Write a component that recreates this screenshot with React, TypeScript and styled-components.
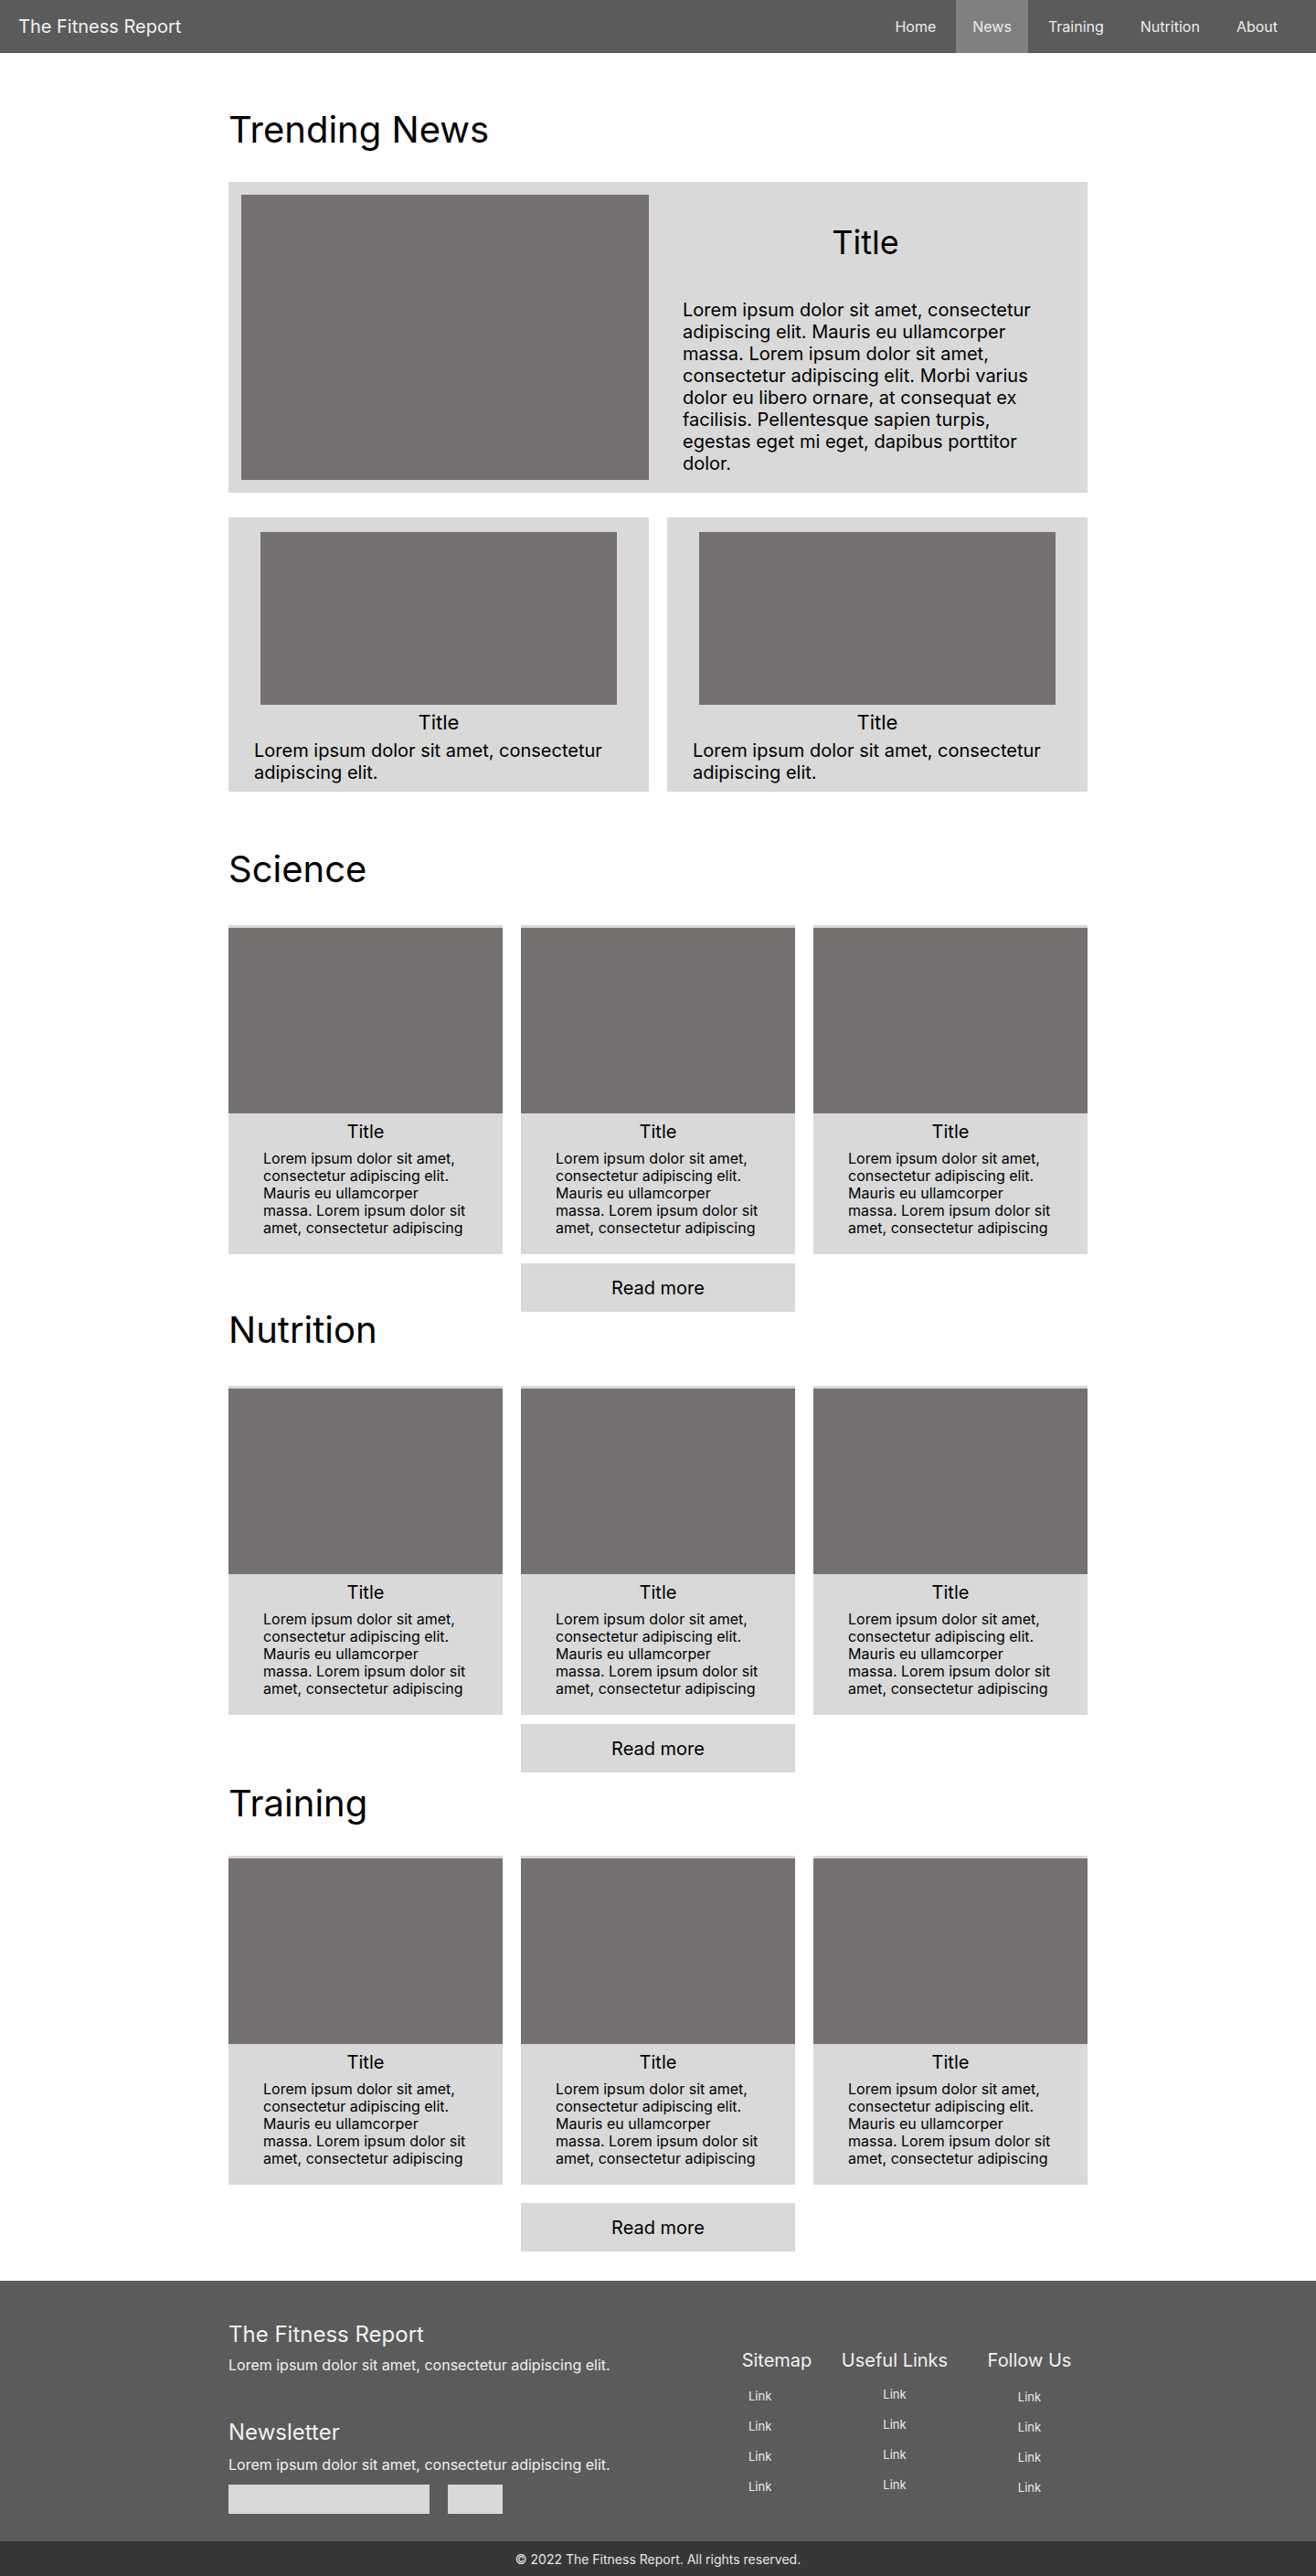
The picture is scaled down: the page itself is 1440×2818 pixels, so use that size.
import React from 'react'
import styled, { createGlobalStyle } from 'styled-components'

const lorem =
    'Lorem ipsum dolor sit amet, consectetur adipiscing elit. Mauris eu ullamcorper massa. Lorem ipsum dolor sit amet, consectetur adipiscing elit. Morbi varius dolor eu libero ornare, at consequat ex facilisis. Pellentesque sapien turpis, egestas eget mi eget, dapibus porttitor dolor.'
const shortLorem = 'Lorem ipsum dolor sit amet, consectetur adipiscing elit.'
const tileLorem =
    'Lorem ipsum dolor sit amet, consectetur adipiscing elit. Mauris eu ullamcorper massa. Lorem ipsum dolor sit amet, consectetur adipiscing'

const navItems = ['Home', 'News', 'Training', 'Nutrition', 'About']

const sections = [
    { name: 'Science', top: 65, bottom: 41, more: 10 },
    { name: 'Nutrition', top: 0, bottom: 41, more: 10 },
    { name: 'Training', top: 14, bottom: 37, more: 20 },
]

// column boxes sit between x=790 and x=1190; links in the sitemap column hug the left
const linkColumns = [
    { title: 'Sitemap', width: 120, pad: 0, listTop: 19, indent: 29 },
    { title: 'Useful Links', width: 138, pad: 0, listTop: 17 },
    { title: 'Follow Us', width: 142, pad: 15, listTop: 20 },
]

const App = () => {
    return (
        <>
            <GlobalStyle />
            <TopBar>
                <Brand>The Fitness Report</Brand>
                <Nav>
                    {navItems.map(item => (
                        <NavLink key={item} href="#" $active={item === 'News'}>
                            {item}
                        </NavLink>
                    ))}
                </Nav>
            </TopBar>

            <Main>
                <SectionTitle $top={0} $bottom={37}>Trending News</SectionTitle>
                <FeatureCard>
                    <FeatureImage />
                    <FeatureBody>
                        <FeatureTitle>Title</FeatureTitle>
                        <FeatureText>{lorem}</FeatureText>
                    </FeatureBody>
                </FeatureCard>
                <PairRow>
                    {[0, 1].map(i => (
                        <PairCard key={i}>
                            <PairImage />
                            <PairTitle>Title</PairTitle>
                            <PairText>{shortLorem}</PairText>
                        </PairCard>
                    ))}
                </PairRow>

                {sections.map(section => (
                    <React.Fragment key={section.name}>
                        <SectionTitle $top={section.top} $bottom={section.bottom}>
                            {section.name}
                        </SectionTitle>
                        <CardGrid>
                            {[0, 1, 2].map(i => (
                                <TileCard key={i}>
                                    <TileImage />
                                    <TileTitle>Title</TileTitle>
                                    <TileText>{tileLorem}</TileText>
                                </TileCard>
                            ))}
                        </CardGrid>
                        <MoreRow $top={section.more}>
                            <MoreButton>Read more</MoreButton>
                        </MoreRow>
                    </React.Fragment>
                ))}
            </Main>

            <Footer>
                <FooterInner>
                    <FooterAbout>
                        <FooterHeading>The Fitness Report</FooterHeading>
                        <FooterText>{shortLorem}</FooterText>
                        <FooterHeading $top={49}>Newsletter</FooterHeading>
                        <FooterText $top={11}>{shortLorem}</FooterText>
                        <NewsletterForm>
                            <EmailInput />
                            <SubmitButton />
                        </NewsletterForm>
                    </FooterAbout>
                    <LinkColumns>
                        {linkColumns.map(col => (
                            <LinkColumn key={col.title} $width={col.width} $pad={col.pad}>
                                <ColumnTitle>{col.title}</ColumnTitle>
                                <LinkList $top={col.listTop} $indent={col.indent}>
                                    {[0, 1, 2, 3].map(i => (
                                        <FooterLink key={i} href="#">Link</FooterLink>
                                    ))}
                                </LinkList>
                            </LinkColumn>
                        ))}
                    </LinkColumns>
                </FooterInner>
                <BottomBar>© 2022 The Fitness Report. All rights reserved.</BottomBar>
            </Footer>
        </>
    )
}

const GlobalStyle = createGlobalStyle`
    * {
        box-sizing: border-box;
    }
    body {
        margin: 0;
        background: #ffffff;
        color: #000000;
        font-family: Inter, "Noto Sans", sans-serif;
    }
    h1, h2, h3, p {
        margin: 0;
        font-weight: 400;
    }
`

const TopBar = styled.header`
    height: 58px;
    background: #5b5b5b;
    display: flex;
    justify-content: space-between;
    align-items: stretch;
    padding: 0 24px 0 20px;
`

const Brand = styled.div`
    display: flex;
    align-items: center;
    font-size: 20px;
    color: #f2f2f2;
`

const Nav = styled.nav`
    display: flex;
    gap: 4px;
`

const NavLink = styled.a<{ $active?: boolean }>`
    display: flex;
    align-items: center;
    padding: 0 18px;
    font-size: 16px;
    color: #ececec;
    text-decoration: none;
    background: ${p => (p.$active ? '#808080' : 'transparent')};
`

const Main = styled.main`
    width: 940px;
    margin: 0 auto;
    padding: 64px 0 32px;
`

const SectionTitle = styled.h2<{ $top: number; $bottom: number }>`
    font-size: 40px;
    line-height: 40px;
    margin: ${p => p.$top}px 0 ${p => p.$bottom}px;
`

const FeatureCard = styled.article`
    display: flex;
    height: 340px;
    padding: 14px;
    background: #d9d9d9;
`

const FeatureImage = styled.div`
    flex-shrink: 0;
    width: 446px;
    height: 312px;
    background: #757170;
`

const FeatureBody = styled.div`
    width: 400px;
    margin-left: 37px;
    padding-top: 30px;
`

const FeatureTitle = styled.h3`
    font-size: 36px;
    text-align: center;
    margin-bottom: 40px;
`

const FeatureText = styled.p`
    font-size: 20px;
    line-height: 24px;
`

const PairRow = styled.div`
    display: grid;
    grid-template-columns: 1fr 1fr;
    gap: 20px;
    margin-top: 27px;
`

const PairCard = styled.article`
    display: flex;
    flex-direction: column;
    align-items: center;
    height: 300px;
    padding-top: 16px;
    background: #d9d9d9;
    overflow: hidden;
`

const PairImage = styled.div`
    width: 390px;
    height: 189px;
    background: #757170;
`

const PairTitle = styled.h3`
    margin-top: 6px;
    font-size: 22px;
`

const PairText = styled.p`
    align-self: stretch;
    margin-top: 6px;
    padding: 0 28px;
    font-size: 20px;
    line-height: 24px;
`

const CardGrid = styled.div`
    display: grid;
    grid-template-columns: repeat(3, 300px);
    gap: 20px;
`

const TileCard = styled.article`
    display: flex;
    flex-direction: column;
    height: 360px;
    padding-top: 3px;
    background: #d9d9d9;
    overflow: hidden;
`

const TileImage = styled.div`
    height: 203px;
    background: #757170;
`

const TileTitle = styled.h3`
    margin-top: 8px;
    font-size: 20px;
    text-align: center;
`

const TileText = styled.p`
    margin: 8px 40px 0 38px;
    font-size: 16px;
    line-height: 19px;
`

const MoreRow = styled.div<{ $top: number }>`
    display: grid;
    grid-template-columns: repeat(3, 300px);
    gap: 20px;
    margin-top: ${p => p.$top}px;
`

const MoreButton = styled.button`
    grid-column: 2;
    height: 53px;
    border: 0;
    background: #d9d9d9;
    color: #000000;
    font-family: Inter, "Noto Sans", sans-serif;
    font-size: 20px;
    cursor: pointer;
`

const Footer = styled.footer`
    background: #5b5b5b;
    color: #f0f0f0;
`

const FooterInner = styled.div`
    width: 940px;
    margin: 0 auto;
    display: flex;
    justify-content: space-between;
    padding: 44px 0 30px;
`

const FooterAbout = styled.div`
    display: flex;
    flex-direction: column;
`

const FooterHeading = styled.h3<{ $top?: number }>`
    margin-top: ${p => p.$top ?? 0}px;
    font-size: 24px;
`

const FooterText = styled.p<{ $top?: number }>`
    margin-top: ${p => p.$top ?? 9}px;
    font-size: 16px;
`

const NewsletterForm = styled.div`
    display: flex;
    gap: 20px;
    margin-top: 12px;
`

const EmailInput = styled.div`
    width: 220px;
    height: 32px;
    background: #d9d9d9;
`

const SubmitButton = styled.div`
    width: 60px;
    height: 32px;
    background: #d9d9d9;
`

const LinkColumns = styled.div`
    display: flex;
    align-items: flex-start;
    padding-top: 31px;
`

const LinkColumn = styled.div<{ $width: number; $pad: number }>`
    display: flex;
    flex-direction: column;
    align-items: center;
    width: ${p => p.$width}px;
    padding-left: ${p => p.$pad}px;
`

const ColumnTitle = styled.h3`
    font-size: 20px;
    white-space: nowrap;
`

const LinkList = styled.div<{ $top: number; $indent?: number }>`
    display: flex;
    flex-direction: column;
    gap: 17px;
    margin-top: ${p => p.$top}px;
    align-self: ${p => (p.$indent ? 'stretch' : 'center')};
    align-items: ${p => (p.$indent ? 'flex-start' : 'center')};
    padding-left: ${p => p.$indent ?? 0}px;
`

const FooterLink = styled.a`
    font-size: 13px;
    line-height: 16px;
    color: #ececec;
    text-decoration: none;
`

const BottomBar = styled.div`
    height: 38px;
    display: flex;
    align-items: center;
    justify-content: center;
    background: #373737;
    color: #e6e6e6;
    font-size: 14px;
`

export default App
